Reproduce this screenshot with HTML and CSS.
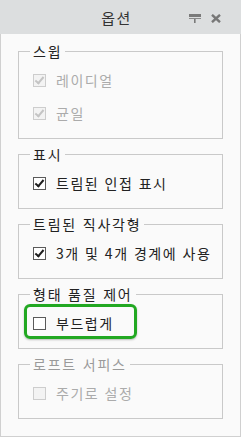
FILE: index.html
```html
<!DOCTYPE html>
<html lang="ko">
<head>
<meta charset="utf-8">
<title>옵션</title>
<link rel="stylesheet" href="styles.css">
</head>
<body>
<div class="panel">
  <div class="titlebar">
    <span></span>
    <span class="title">옵션</span>
    <span class="tools">
      <svg class="pin" width="12" height="9" viewBox="0 0 12 9"><rect x="0" y="0" width="12" height="3" fill="#7a7a7a"/><rect x="0" y="4" width="12" height="1" fill="#8a8a8a"/><rect x="5" y="5" width="1.6" height="4" fill="#7a7a7a"/></svg>
      <svg class="close" width="10" height="9" viewBox="0 0 10 9"><path d="M1 0.8 L9 8.2 M9 0.8 L1 8.2" stroke="#777" stroke-width="2.4" fill="none"/></svg>
    </span>
  </div>
  <div class="content">
    <fieldset class="group">
      <legend>스윕</legend>
      <div class="rows">
        <div class="row disabled"><span class="cb checked"></span><span class="label">레이디얼</span></div>
        <div class="row disabled"><span class="cb checked"></span><span class="label">균일</span></div>
      </div>
    </fieldset>
    <fieldset class="group">
      <legend>표시</legend>
      <div class="rows">
        <div class="row"><span class="cb checked"></span><span class="label">트림된 인접 표시</span></div>
      </div>
    </fieldset>
    <fieldset class="group">
      <legend>트림된 직사각형</legend>
      <div class="rows">
        <div class="row"><span class="cb checked"></span><span class="label">3개 및 4개 경계에 사용</span></div>
      </div>
    </fieldset>
    <fieldset class="group">
      <legend>형태 품질 제어</legend>
      <div class="rows">
        <div class="row highlight"><span class="cb"></span><span class="label">부드럽게</span></div>
      </div>
    </fieldset>
    <fieldset class="group off">
      <legend>로프트 서피스</legend>
      <div class="rows">
        <div class="row disabled"><span class="cb"></span><span class="label">주기로 설정</span></div>
      </div>
    </fieldset>
  </div>
</div>
</body>
</html>
```

FILE: styles.css
```css
html, body {
  margin: 0;
  padding: 0;
  background: #ffffff;
}
body {
  font-family: "Noto Sans CJK KR", "Noto Sans", sans-serif;
  font-size: 14px;
  color: #222;
}
.panel {
  width: 241px;
  height: 437px;
  box-sizing: border-box;
  border: 1px solid #d0d0d0;
  border-top: none;
  background: #fafafa;
}
.titlebar {
  height: 34px;
  margin: 0 -1px;
  background: #dcdedf;
  display: grid;
  grid-template-columns: 1fr auto 1fr;
  align-items: center;
}
.title {
  font-size: 15px;
  color: #333;
  letter-spacing: 1.5px;
  line-height: 20px;
  padding-right: 8px;
  padding-top: 1px;
}
.tools {
  justify-self: end;
  display: flex;
  align-items: center;
  gap: 10px;
  padding-right: 20px;
  padding-top: 2px;
}
.pin, .close { display: block; }
.content {
  padding: 8px 17px 0 17px;
  display: flex;
  flex-direction: column;
  gap: 6px;
}
.group {
  margin: 0;
  padding: 0;
  min-width: 0;
  border: 1px solid #c9c9c9;
}
.group legend {
  margin-left: 11px;
  padding: 0 3px;
  line-height: 18px;
  letter-spacing: 1.8px;
  color: #222;
}
.group.off legend { color: #9a9a9a; }
.rows {
  padding: 10px 0 15px 14px;
  display: flex;
  flex-direction: column;
  gap: 13px;
}
.row {
  position: relative;
  height: 20px;
  display: flex;
  align-items: center;
  gap: 10px;
}
.label {
  line-height: 20px;
  letter-spacing: 1.5px;
  color: #222;
}
.cb {
  width: 11px;
  height: 11px;
  border: 1px solid #5a5a5a;
  background: #ffffff;
  position: relative;
  flex: none;
}
.cb.checked::after {
  content: "";
  position: absolute;
  left: 3px;
  top: 0px;
  width: 3px;
  height: 7px;
  border: solid #1e1e1e;
  border-width: 0 2px 2px 0;
  transform: rotate(40deg);
}
.row.disabled .label { color: #ababab; }
.row.disabled .cb {
  border-color: #cdcdcd;
  background: #f3f3f3;
}
.row.disabled .cb.checked::after { border-color: #c4c4c4; }
.row.highlight::before {
  content: "";
  position: absolute;
  left: -9px;
  top: -9px;
  width: 107px;
  height: 29px;
  border: 3px solid #22a822;
  border-radius: 6px;
  box-shadow: 0 1px 2px rgba(0,0,0,0.25);
}
```
